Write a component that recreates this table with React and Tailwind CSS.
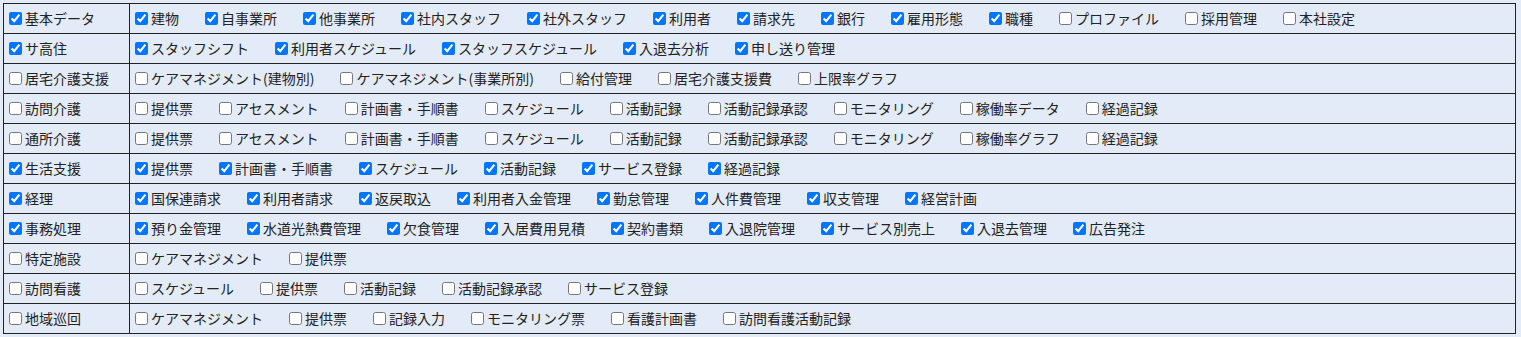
import React from "react";

const rows = [
  { name: "基本データ", checked: true, items: [["建物", 1], ["自事業所", 1], ["他事業所", 1], ["社内スタッフ", 1], ["社外スタッフ", 1], ["利用者", 1], ["請求先", 1], ["銀行", 1], ["雇用形態", 1], ["職種", 1], ["プロファイル", 0], ["採用管理", 0], ["本社設定", 0]] },
  { name: "サ高住", checked: true, items: [["スタッフシフト", 1], ["利用者スケジュール", 1], ["スタッフスケジュール", 1], ["入退去分析", 1], ["申し送り管理", 1]] },
  { name: "居宅介護支援", checked: false, items: [["ケアマネジメント(建物別)", 0], ["ケアマネジメント(事業所別)", 0], ["給付管理", 0], ["居宅介護支援費", 0], ["上限率グラフ", 0]] },
  { name: "訪問介護", checked: false, items: [["提供票", 0], ["アセスメント", 0], ["計画書・手順書", 0], ["スケジュール", 0], ["活動記録", 0], ["活動記録承認", 0], ["モニタリング", 0], ["稼働率データ", 0], ["経過記録", 0]] },
  { name: "通所介護", checked: false, items: [["提供票", 0], ["アセスメント", 0], ["計画書・手順書", 0], ["スケジュール", 0], ["活動記録", 0], ["活動記録承認", 0], ["モニタリング", 0], ["稼働率グラフ", 0], ["経過記録", 0]] },
  { name: "生活支援", checked: true, items: [["提供票", 1], ["計画書・手順書", 1], ["スケジュール", 1], ["活動記録", 1], ["サービス登録", 1], ["経過記録", 1]] },
  { name: "経理", checked: true, items: [["国保連請求", 1], ["利用者請求", 1], ["返戻取込", 1], ["利用者入金管理", 1], ["勤怠管理", 1], ["人件費管理", 1], ["収支管理", 1], ["経営計画", 1]] },
  { name: "事務処理", checked: true, items: [["預り金管理", 1], ["水道光熱費管理", 1], ["欠食管理", 1], ["入居費用見積", 1], ["契約書類", 1], ["入退院管理", 1], ["サービス別売上", 1], ["入退去管理", 1], ["広告発注", 1]] },
  { name: "特定施設", checked: false, items: [["ケアマネジメント", 0], ["提供票", 0]] },
  { name: "訪問看護", checked: false, items: [["スケジュール", 0], ["提供票", 0], ["活動記録", 0], ["活動記録承認", 0], ["サービス登録", 0]] },
  { name: "地域巡回", checked: false, items: [["ケアマネジメント", 0], ["提供票", 0], ["記録入力", 0], ["モニタリング票", 0], ["看護計画書", 0], ["訪問看護活動記録", 0]] },
];

function Item({ label, checked }) {
  return (
    <label className="inline-flex items-center whitespace-nowrap">
      <input
        type="checkbox"
        defaultChecked={checked}
        className="ml-[4px] mr-[3px] w-[13px] h-[13px] shrink-0"
      />
      <span className="pb-[2px]">{label}</span>
    </label>
  );
}

export default function App() {
  return (
    <div
      className="min-h-[337px] bg-[#e4ebf8] p-[3px] text-[14px] leading-[20px] text-[#222]"
      style={{ fontFamily: '"Noto Sans CJK JP", "Noto Sans", sans-serif' }}
    >
      <table className="w-[1513px] border-collapse border border-[#222]">
        <tbody>
          {rows.map((r) => (
            <tr key={r.name} className="h-[30px]">
              <td className="w-[126px] border border-[#222] px-[1px] py-0 align-middle">
                <Item label={r.name} checked={r.checked} />
              </td>
              <td className="border border-[#222] px-[1px] py-0 align-middle">
                <div className="flex items-center gap-x-[22px]">
                  {r.items.map(([l, c], i) => (
                    <Item key={i} label={l} checked={!!c} />
                  ))}
                </div>
              </td>
            </tr>
          ))}
        </tbody>
      </table>
    </div>
  );
}
